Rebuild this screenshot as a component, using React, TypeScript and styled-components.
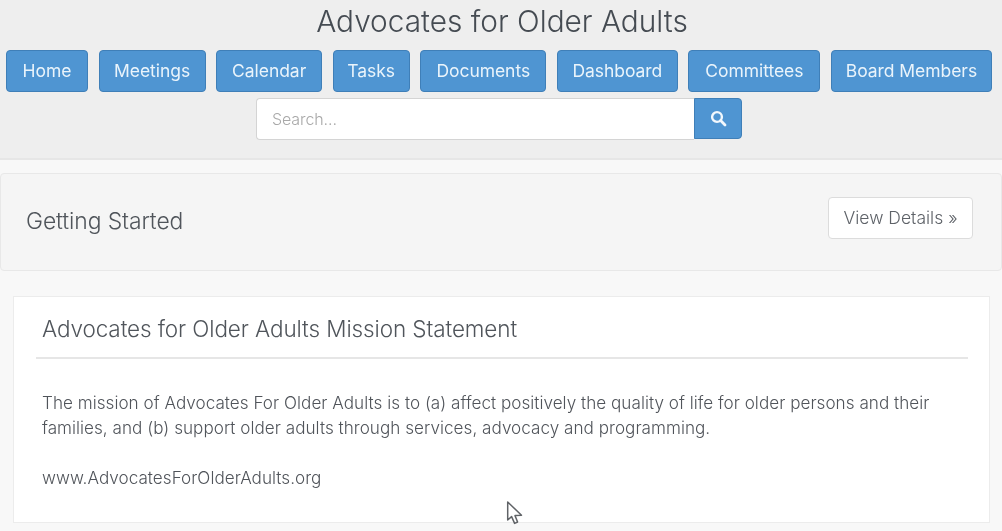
import React from "react";
import styled, { createGlobalStyle } from "styled-components";

const Global = createGlobalStyle`
  html, body { margin: 0; padding: 0; background: #f8f8f8; overflow: hidden; }
  body { font-family: "Inter", "Liberation Sans", sans-serif; font-weight: 300; color: #555; }
`;
const Page = styled.div`
  position: relative;
  width: 1002px;
  height: 531px;
  overflow: hidden;
  background: #f8f8f8;
  filter: blur(0.4px);
`;
const Header = styled.header`
  height: 158px;
  background: #eeeeee;
  border-bottom: 2px solid #e6e6e6;
  display: flex;
  flex-direction: column;
  align-items: center;
`;
const Title = styled.h1`
  margin: 0 0 0 2px;
  height: 50px;
  line-height: 42px;
  font-size: 29.8px;
  font-weight: 300;
  letter-spacing: 0;
  color: #454b52;
`;
const Nav = styled.nav`
  display: flex;
  width: 986px;
  margin-right: 4px;
  justify-content: space-between;
`;
const NavButton = styled.a<{ $w: number }>`
  box-sizing: border-box;
  width: ${(p) => p.$w}px;
  height: 42px;
  display: flex;
  align-items: center;
  justify-content: center;
  background: #4f95d2;
  border: 1px solid #3f7fb8;
  border-radius: 4px;
  color: #eaf4fb;
  font-size: 17.5px;
  font-weight: 400;
  letter-spacing: -0.05px;
  padding-bottom: 1px;
`;
const SearchRow = styled.form`
  display: flex;
  margin-top: 6px;
  margin-right: 4px;
  width: 486px;
  height: 42px;
`;
const SearchInput = styled.div`
  box-sizing: border-box;
  width: 438px;
  height: 42px;
  background: #fff;
  border: 1px solid #d4d4d4;
  border-right: 0;
  border-radius: 4px 0 0 4px;
  padding-left: 15px;
  display: flex;
  align-items: center;
  color: #a8a8a8;
  font-size: 16px;
  letter-spacing: -0.1px;
`;
const SearchButton = styled.button`
  box-sizing: border-box;
  width: 48px;
  height: 41px;
  padding: 0;
  background: #4f95d2;
  border: 1px solid #3f7fb8;
  border-radius: 0 4px 4px 0;
  display: flex;
  align-items: center;
  justify-content: center;
`;
const Well = styled.section`
  box-sizing: border-box;
  margin-top: 13px;
  height: 98px;
  background: #f5f5f5;
  border: 1px solid #e8e8e8;
  border-radius: 4px;
  display: flex;
  align-items: center;
  justify-content: space-between;
  padding: 0 28px 2px 25px;
`;
const WellTitle = styled.h2`
  margin: 0;
  font-size: 22.9px;
  font-weight: 300;
  letter-spacing: -0.1px;
  color: #50555b;
`;
const DetailsButton = styled.a`
  box-sizing: border-box;
  width: 145px;
  height: 42px;
  margin-top: -7px;
  background: #fff;
  border: 1px solid #dcdcdc;
  border-radius: 4px;
  display: flex;
  align-items: center;
  justify-content: center;
  font-size: 17.5px;
  letter-spacing: 0;
  color: #5e6268;
`;
const Card = styled.article`
  box-sizing: border-box;
  margin: 25px 12px 0 13px;
  height: 227px;
  background: #fff;
  border: 1px solid #ececec;
  padding: 0 21px 0 22px;
`;
const CardHead = styled.div`
  box-sizing: border-box;
  height: 62px;
  border-bottom: 2px solid #e6e6e6;
  display: flex;
  align-items: center;
  padding: 2px 0 0 6px;
`;
const CardTitle = styled.h3`
  margin: 0;
  font-size: 22.5px;
  font-weight: 300;
  letter-spacing: -0.1px;
  color: #50555b;
`;
const Body = styled.div`
  padding: 31px 0 0 6px;
  font-size: 17.1px;
  line-height: 25px;
  letter-spacing: 0.03px;
  color: #50545a;
`;
const Para = styled.p`
  margin: 0 0 25px;
`;
const Cursor = styled.svg`
  position: absolute;
  left: 506px;
  top: 501px;
`;

const items: [string, number][] = [
  ["Home", 82],
  ["Meetings", 107],
  ["Calendar", 106],
  ["Tasks", 77],
  ["Documents", 126],
  ["Dashboard", 121],
  ["Committees", 132],
  ["Board Members", 161],
];

export default function App() {
  return (
    <Page>
      <Global />
      <Header>
        <Title>Advocates for Older Adults</Title>
        <Nav>
          {items.map(([label, w]) => (
            <NavButton key={label} $w={w}>{label}</NavButton>
          ))}
        </Nav>
        <SearchRow>
          <SearchInput>Search...</SearchInput>
          <SearchButton type="button" aria-label="Search">
            <svg width="17" height="17" viewBox="0 0 17 17" fill="none">
              <circle cx="7" cy="7" r="4.9" stroke="#f2f8fd" strokeWidth="2.4" />
              <path d="M10.6 10.6 L15 15" stroke="#f2f8fd" strokeWidth="2.8" strokeLinecap="round" />
            </svg>
          </SearchButton>
        </SearchRow>
      </Header>
      <Well>
        <WellTitle>Getting Started</WellTitle>
        <DetailsButton>View Details »</DetailsButton>
      </Well>
      <Card>
        <CardHead>
          <CardTitle>Advocates for Older Adults Mission Statement</CardTitle>
        </CardHead>
        <Body>
          <Para>
            The mission of Advocates For Older Adults is to (a) affect positively the quality of life for older persons and their
            <br />
            families, and (b) support older adults through services, advocacy and programming.
          </Para>
          <Para>www.AdvocatesForOlderAdults.org</Para>
        </Body>
      </Card>
      <Cursor width="18" height="25" viewBox="0 0 18 25" fill="none">
        <path d="M1.7 1 L1.7 19 L5.6 15.6 L8.6 22.4 L11.6 21 L9 14.6 L15.5 14.2 Z" fill="#fff" stroke="#606367" strokeWidth="1.5" strokeLinejoin="round" />
      </Cursor>
    </Page>
  );
}
